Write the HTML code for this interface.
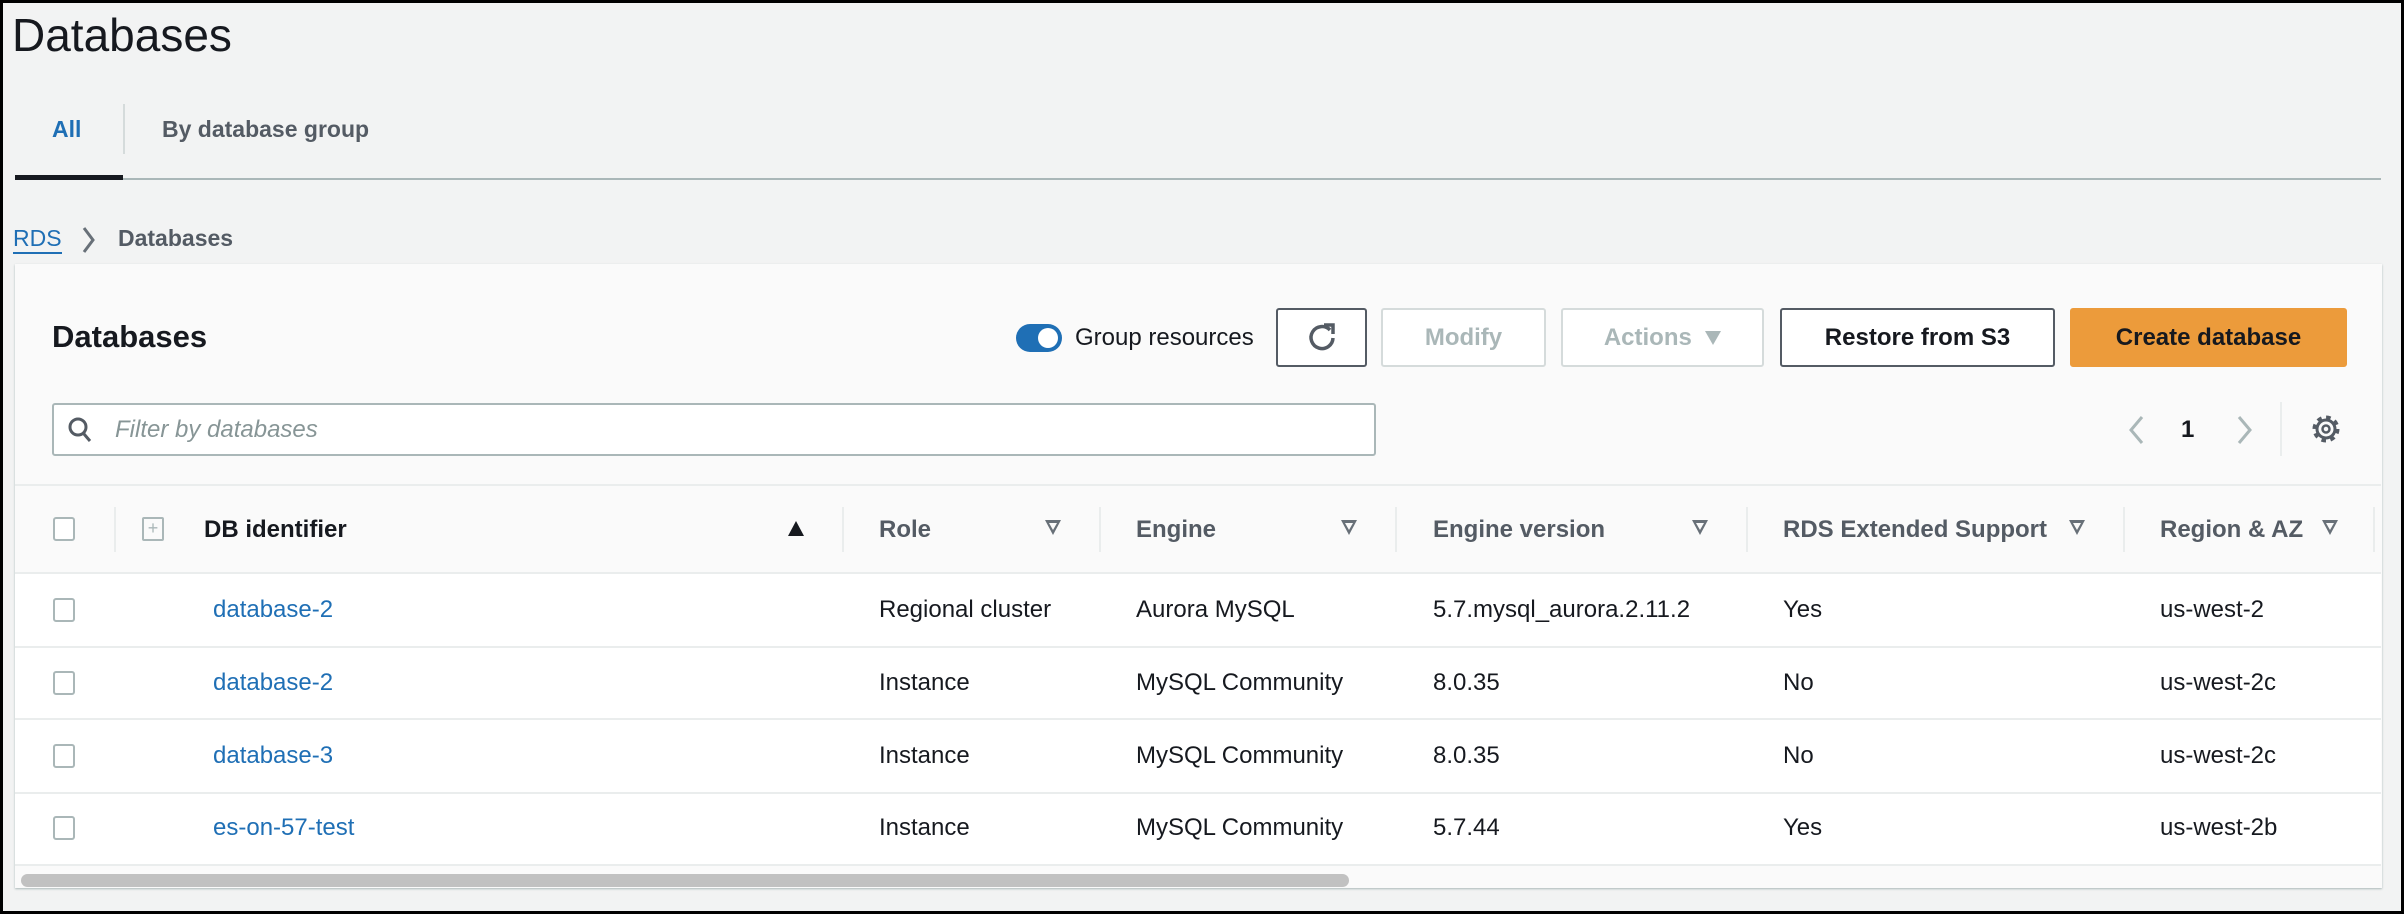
<!DOCTYPE html>
<html><head><meta charset="utf-8"><style>
*{box-sizing:border-box;margin:0;padding:0}
body{width:2404px;height:914px;background:#f2f3f3;font-family:"Liberation Sans",sans-serif;color:#16191f;position:relative;overflow:hidden}
.frame{position:absolute;left:0;top:0;width:2404px;height:914px;border:3px solid #000;z-index:10;pointer-events:none}
.a{position:absolute;white-space:nowrap}
.btn{position:absolute;top:308px;height:59px;border:2px solid #545b64;border-radius:3px;background:#fff;font-weight:bold;font-size:24px;display:flex;align-items:center;justify-content:center;color:#16191f}
.dis{border-color:#d5dbdb;color:#aab7b8}
.hd{position:absolute;top:516px;font-weight:bold;font-size:24px;color:#545b64}
.dv{position:absolute;top:507px;width:2px;height:45px;background:#eaeded}
.cb{position:absolute;left:53px;width:22px;height:24px;border:2px solid #aab7b8;border-radius:3px;background:#fff}
.row{position:absolute;left:15px;width:2366px;background:#fff;border-top:2px solid #eaeded}
.t{position:absolute;font-size:24px;white-space:nowrap}
.lk{color:#1f6fb5}
.fi{position:absolute;top:520px;width:0;height:0;border-left:8px solid transparent;border-right:8px solid transparent;border-top:15px solid #687078}
.fi:after{content:"";position:absolute;left:-4px;top:-12px;border-left:4px solid transparent;border-right:4px solid transparent;border-top:7px solid #fafafa}
</style></head><body>
<div class="frame"></div>
<div class="a" style="left:12px;top:8px;font-size:46px">Databases</div>
<div class="a" style="left:52px;top:116px;font-size:23px;font-weight:bold;color:#1f6fb5">All</div>
<div class="a" style="left:123px;top:104px;width:2px;height:50px;background:#d5dbdb"></div>
<div class="a" style="left:162px;top:116px;font-size:23px;font-weight:bold;color:#545b64">By database group</div>
<div class="a" style="left:15px;top:178px;width:2366px;height:2px;background:#aab7b8"></div>
<div class="a" style="left:15px;top:175px;width:108px;height:5px;background:#16191f"></div>
<div class="a" style="left:13px;top:225px;font-size:23px;color:#1f6fb5;border-bottom:2px solid #1f6fb5;line-height:27px">RDS</div>
<svg class="a" style="left:80px;top:225px" width="18" height="30"><path d="M4 3 L13 15 L4 27" stroke="#687078" stroke-width="3" fill="none"/></svg>
<div class="a" style="left:118px;top:225px;font-size:23px;font-weight:bold;color:#545b64">Databases</div>

<div class="a" style="left:15px;top:264px;width:2367px;height:624px;background:#fafafa;box-shadow:0 1px 2px #aab7b8"></div>
<div class="a" style="left:52px;top:319px;font-size:31px;font-weight:bold">Databases</div>
<div class="a" style="left:1016px;top:324px;width:46px;height:28px;border-radius:14px;background:#1f6fb5"><div style="position:absolute;right:4px;top:4px;width:20px;height:20px;border-radius:50%;background:#fff"></div></div>
<div class="a" style="left:1075px;top:324px;font-size:24px">Group resources</div>
<div class="btn" style="left:1276px;width:91px"><svg width="34" height="34" viewBox="0 0 34 34"><path d="M25 9 A11 11 0 1 0 28 17" stroke="#545b64" stroke-width="3.5" fill="none"/><path d="M19 4 L28 4 L28 13" stroke="#545b64" stroke-width="3.5" fill="none"/></svg></div>
<div class="btn dis" style="left:1381px;width:165px">Modify</div>
<div class="btn dis" style="left:1561px;width:203px">Actions&nbsp;&nbsp;<span style="display:inline-block;border-left:8px solid transparent;border-right:8px solid transparent;border-top:14px solid #aab7b8"></span></div>
<div class="btn" style="left:1780px;width:275px">Restore from S3</div>
<div class="btn" style="left:2070px;width:277px;background:#ec9b3b;border-color:#ec9b3b">Create database</div>

<div class="a" style="left:52px;top:403px;width:1324px;height:53px;background:#fff;border:2px solid #aab7b8;border-radius:3px"></div>
<svg class="a" style="left:67px;top:416px" width="26" height="28"><circle cx="11" cy="11" r="8" stroke="#545b64" stroke-width="3" fill="none"/><path d="M17 18 L23 25" stroke="#545b64" stroke-width="3"/></svg>
<div class="a" style="left:115px;top:416px;font-size:24px;font-style:italic;color:#879596">Filter by databases</div>

<svg class="a" style="left:2124px;top:414px" width="24" height="32"><path d="M18 3 L7 16 L18 29" stroke="#aab7b8" stroke-width="3" fill="none"/></svg>
<div class="a" style="left:2181px;top:416px;font-size:24px;font-weight:bold">1</div>
<svg class="a" style="left:2233px;top:414px" width="24" height="32"><path d="M6 3 L17 16 L6 29" stroke="#aab7b8" stroke-width="3" fill="none"/></svg>
<div class="a" style="left:2280px;top:402px;width:2px;height:54px;background:#eaeded"></div>
<svg class="a" style="left:2310px;top:413px" width="32" height="32" viewBox="0 0 32 32"><circle cx="16" cy="16" r="11" stroke="#545b64" stroke-width="5" stroke-dasharray="4.3 4.3" fill="none"/><circle cx="16" cy="16" r="9" stroke="#545b64" stroke-width="3" fill="none"/><circle cx="16" cy="16" r="3.5" stroke="#545b64" stroke-width="2.5" fill="none"/></svg>

<div class="a" style="left:15px;top:484px;width:2366px;height:2px;background:#eaeded"></div>
<div class="cb" style="top:517px"></div>
<div class="dv" style="left:114px"></div>
<div class="a" style="left:142px;top:517px;width:22px;height:24px;border:2px solid #aab7b8;border-radius:2px;color:#aab7b8;font-size:18px;line-height:18px;text-align:center">+</div>
<div class="hd" style="left:204px;color:#16191f">DB identifier</div>
<div class="a" style="left:788px;top:521px;border-left:8px solid transparent;border-right:8px solid transparent;border-bottom:15px solid #16191f"></div>
<div class="dv" style="left:842px"></div>
<div class="hd" style="left:879px">Role</div><div class="fi" style="left:1045px"></div>
<div class="dv" style="left:1099px"></div>
<div class="hd" style="left:1136px">Engine</div><div class="fi" style="left:1341px"></div>
<div class="dv" style="left:1395px"></div>
<div class="hd" style="left:1433px">Engine version</div><div class="fi" style="left:1692px"></div>
<div class="dv" style="left:1746px"></div>
<div class="hd" style="left:1783px">RDS Extended Support</div><div class="fi" style="left:2069px"></div>
<div class="dv" style="left:2123px"></div>
<div class="hd" style="left:2160px">Region &amp; AZ</div><div class="fi" style="left:2322px"></div>
<div class="dv" style="left:2373px"></div>

<div class="row" style="top:572px;height:75px"></div>
<div class="row" style="top:646px;height:73px"></div>
<div class="row" style="top:718px;height:75px"></div>
<div class="row" style="top:792px;height:73px"></div>
<div class="a" style="left:15px;top:864px;width:2366px;height:2px;background:#eaeded"></div>

<div class="cb" style="top:598px"></div>
<div class="t lk" style="left:213px;top:596px">database-2</div>
<div class="t" style="left:879px;top:596px">Regional cluster</div>
<div class="t" style="left:1136px;top:596px">Aurora MySQL</div>
<div class="t" style="left:1433px;top:596px">5.7.mysql_aurora.2.11.2</div>
<div class="t" style="left:1783px;top:596px">Yes</div>
<div class="t" style="left:2160px;top:596px">us-west-2</div>

<div class="cb" style="top:671px"></div>
<div class="t lk" style="left:213px;top:669px">database-2</div>
<div class="t" style="left:879px;top:669px">Instance</div>
<div class="t" style="left:1136px;top:669px">MySQL Community</div>
<div class="t" style="left:1433px;top:669px">8.0.35</div>
<div class="t" style="left:1783px;top:669px">No</div>
<div class="t" style="left:2160px;top:669px">us-west-2c</div>

<div class="cb" style="top:744px"></div>
<div class="t lk" style="left:213px;top:742px">database-3</div>
<div class="t" style="left:879px;top:742px">Instance</div>
<div class="t" style="left:1136px;top:742px">MySQL Community</div>
<div class="t" style="left:1433px;top:742px">8.0.35</div>
<div class="t" style="left:1783px;top:742px">No</div>
<div class="t" style="left:2160px;top:742px">us-west-2c</div>

<div class="cb" style="top:816px"></div>
<div class="t lk" style="left:213px;top:814px">es-on-57-test</div>
<div class="t" style="left:879px;top:814px">Instance</div>
<div class="t" style="left:1136px;top:814px">MySQL Community</div>
<div class="t" style="left:1433px;top:814px">5.7.44</div>
<div class="t" style="left:1783px;top:814px">Yes</div>
<div class="t" style="left:2160px;top:814px">us-west-2b</div>

<div class="a" style="left:21px;top:874px;width:1328px;height:13px;border-radius:7px;background:#c1c1c1"></div>
</body></html>
